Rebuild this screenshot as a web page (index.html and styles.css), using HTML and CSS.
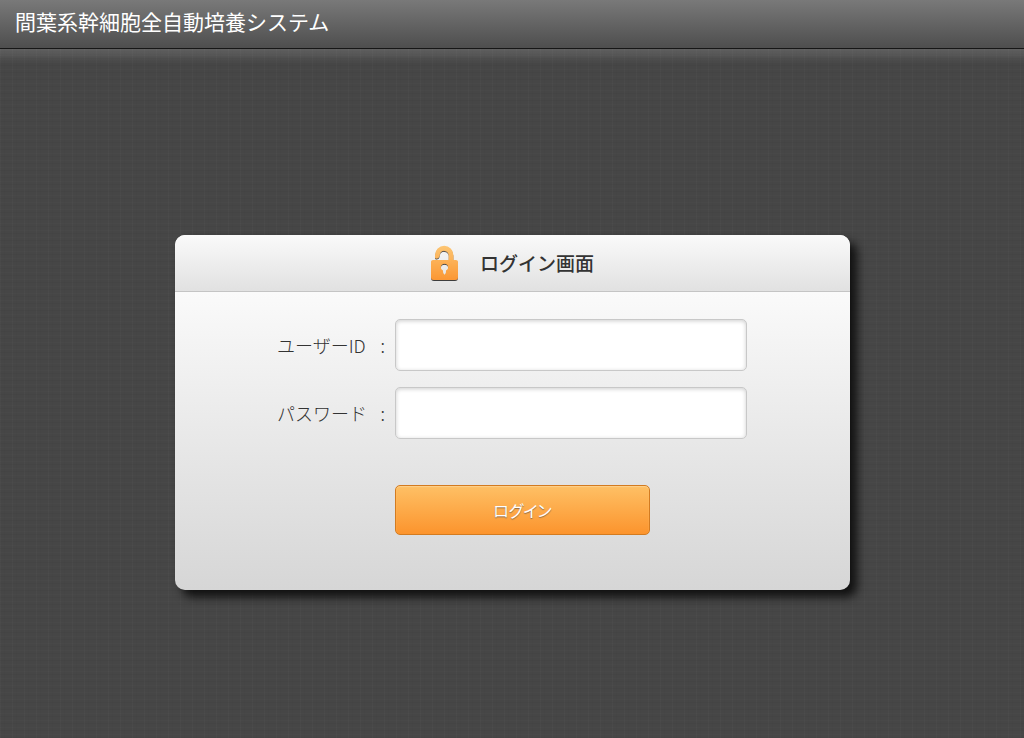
FILE: index.html
```
<!DOCTYPE html>
<html lang="ja">
<head>
<meta charset="utf-8">
<meta name="viewport" content="width=device-width, initial-scale=1">
<title>間葉系幹細胞全自動培養システム</title>
<link rel="stylesheet" href="styles.css">
</head>
<body class="page">
<header class="topbar">
  <h1 class="topbar-title">間葉系幹細胞全自動培養システム</h1>
</header>
<main class="content">
  <form class="card">
    <div class="card-header">
      <svg class="lock" width="30" height="38" viewBox="0 0 30 38" aria-hidden="true">
        <defs>
          <linearGradient id="lock-fill" x1="0" y1="0" x2="0" y2="38" gradientUnits="userSpaceOnUse">
            <stop offset="0" stop-color="#fdc876"/>
            <stop offset="1" stop-color="#fb942f"/>
          </linearGradient>
          <filter id="lock-shadow" x="-20%" y="-20%" width="140%" height="140%">
            <feDropShadow dx="0" dy="1" stdDeviation="0.7" flood-color="#222" flood-opacity="0.85"/>
          </filter>
        </defs>
        <g filter="url(#lock-shadow)">
          <path fill="url(#lock-fill)" d="M5 13.500V11A9.200 9.200 0 0 1 23.400 11V18H18.700V11A4.500 4.500 0 0 0 9.800 10.500L9.700 11.500Q9 14.500 6.500 14.500Q5 14.500 5 13.500Z"/>
          <path fill="url(#lock-fill)" fill-rule="evenodd" d="M3 16H26Q28 16 28 18V33Q28 36 25 36H4Q1 36 1 33V18Q1 16 3 16ZM13 26.500Q12.500 29.500 14.500 30.800Q16.500 29.500 16 26.500Q18.200 25.500 18.200 23.500A3.700 3.700 0 0 0 10.800 23.500Q10.800 25.500 13 26.500Z"/>
        </g>
      </svg>
      <h2 class="card-title">ログイン画面</h2>
    </div>
    <div class="fields">
      <label class="label" for="user-id"><span>ユーザーID</span><span>:</span></label>
      <input class="input" id="user-id" type="text" autocomplete="username">
      <label class="label" for="password"><span>パスワード</span><span>:</span></label>
      <input class="input" id="password" type="password" autocomplete="current-password">
      <button class="submit" type="button">ログイン</button>
    </div>
  </form>
</main>
</body>
</html>
```
FILE: styles.css
```
* {
  box-sizing: border-box;
}

.page {
  margin: 0;
  min-height: 100vh;
  color: #333;
  font-family: "Noto Sans CJK JP", sans-serif;
  background-color: #464646;
  background-image:
    repeating-linear-gradient(90deg, rgba(255, 255, 255, 0.02) 0 1px, transparent 1px 4px, rgba(0, 0, 0, 0.02) 4px 5px, transparent 5px 12px),
    repeating-linear-gradient(0deg, rgba(0, 0, 0, 0.03) 0 1px, transparent 1px 3px, rgba(255, 255, 255, 0.01) 3px 4px, transparent 4px 7px);
}

.topbar {
  height: 49px;
  padding: 0 15px;
  border-bottom: 1px solid #161616;
  background: linear-gradient(#797979, #4e4e4e);
}

.topbar-title {
  margin: 0;
  color: #fff;
  font-size: 21px;
  font-weight: 400;
  line-height: 42px;
  white-space: nowrap;
}

.content {
  padding: 186px 16px 48px;
  background: linear-gradient(rgba(255, 255, 255, 0.14), rgba(255, 255, 255, 0)) 0 0 / 100% 14px no-repeat;
}

.card {
  max-width: 675px;
  margin: 0 auto;
  overflow: hidden;
  border-radius: 10px;
  background: linear-gradient(#fafafa 57px, #d6d6d6);
  box-shadow: 7px 7px 10px #111;
}

.card-header {
  display: flex;
  align-items: center;
  justify-content: center;
  gap: 20px;
  height: 57px;
  border-bottom: 1px solid #c4c4c4;
  background: linear-gradient(#fafafa, #e1e1e1);
}

.lock {
  flex: none;
}

.card-title {
  margin: 0;
  font-size: 19px;
  font-weight: 500;
  line-height: 28px;
}

.fields {
  display: grid;
  grid-template-columns: 108px minmax(0, 352px);
  justify-content: center;
  align-items: center;
  gap: 16px 10px;
  padding: 27px 0 55px;
}

.label {
  display: flex;
  justify-content: space-between;
  font-size: 18px;
  font-weight: 300;
  line-height: 26px;
  white-space: nowrap;
}

.input {
  width: 100%;
  height: 52px;
  padding: 8px 12px;
  border: 1px solid #c8c8c8;
  border-radius: 5px;
  background: #fff;
  box-shadow: inset 0 1px 4px rgba(0, 0, 0, 0.2);
  font: inherit;
  font-size: 18px;
}

.submit {
  grid-column: 2;
  width: 255px;
  max-width: 100%;
  height: 50px;
  margin-top: 30px;
  padding: 0;
  border: 1px solid #d37b20;
  border-radius: 5px;
  background: linear-gradient(#fec065, #fc942d);
  box-shadow: inset 0 1px 1px #fed08b;
  color: #fff;
  font: inherit;
  font-size: 16px;
  font-feature-settings: "palt";
  text-shadow: 0 1px 1px #8a6a4a;
}
```
